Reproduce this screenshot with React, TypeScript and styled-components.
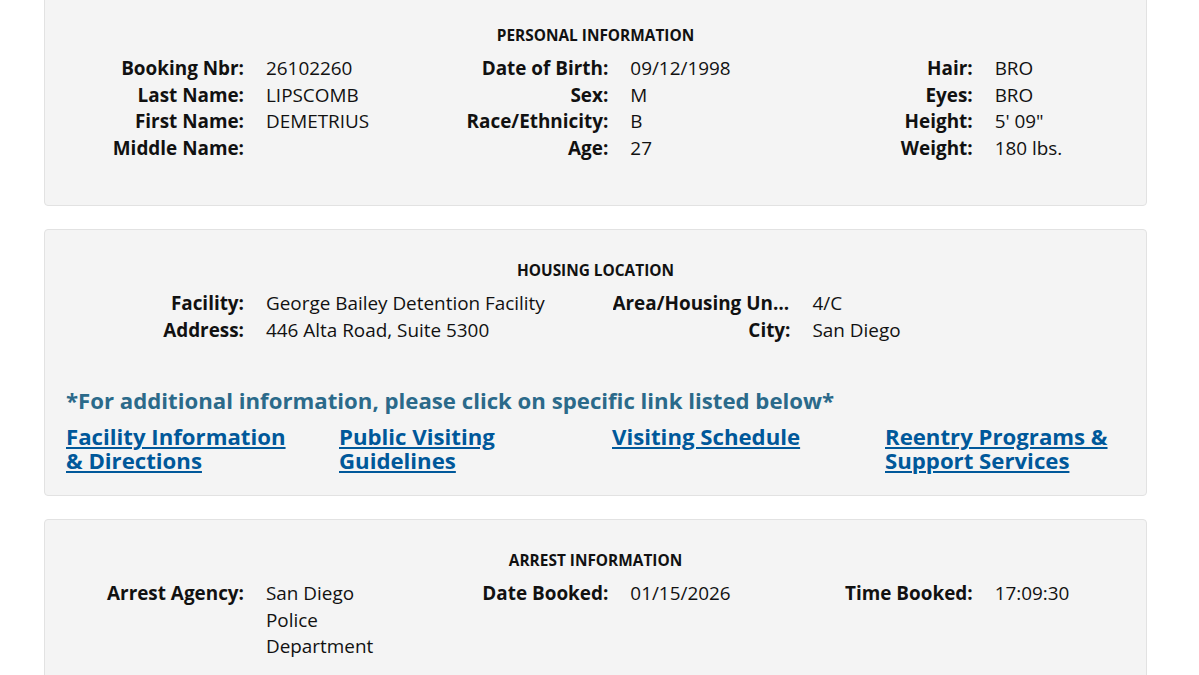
import React from "react";
import styled, { createGlobalStyle } from "styled-components";

const Global = createGlobalStyle`
  html, body { margin: 0; padding: 0; background: #ffffff; }
  body { font-family: "Open Sans", "Noto Sans", sans-serif; color: #111; }
`;

const Page = styled.div`
  display: flex;
  flex-direction: column;
  gap: 23px;
  padding: 0 52px 0 44px;
  margin-top: -6px;
`;

const Panel = styled.section`
  background: #f4f4f4;
  border: 1px solid #e2e2e2;
  border-radius: 4px;
  padding: 30px 4px 0 4px;
`;

const Title = styled.h2`
  margin: 0 0 8px 0;
  text-align: center;
  font-size: 15.4px;
  line-height: 22px;
  font-weight: 700;
  color: #111;
`;

const Grid = styled.div<{ $cols: number; $bottom: number }>`
  display: grid;
  grid-template-columns: repeat(${(p) => p.$cols}, 1fr);
  padding-bottom: ${(p) => p.$bottom}px;
`;

const Column = styled.div`
  display: flex;
  flex-direction: column;
  padding-left: 17px;
`;

const Row = styled.div`
  display: flex;
  align-items: flex-start;
  gap: 22px;
  font-size: 18.9px;
  line-height: 26.5px;
`;

const Label = styled.div`
  width: 178px;
  flex: none;
  text-align: right;
  font-weight: 700;
  white-space: nowrap;
  overflow: hidden;
  text-overflow: ellipsis;
`;

const Value = styled.div<{ $wide?: boolean }>`
  font-weight: 400;
  min-width: 0;
  max-width: ${(p) => (p.$wide ? "none" : "120px")};
  white-space: ${(p) => (p.$wide ? "nowrap" : "normal")};
`;

const LinksBlock = styled.div`
  padding: 0 0 22px 17px;
  margin-top: 44px;
`;

const Notice = styled.p`
  margin: 0 0 10px 0;
  font-size: 22.2px;
  line-height: 28px;
  font-weight: 700;
  color: #2b6a8a;
`;

const LinkGrid = styled.div`
  display: grid;
  grid-template-columns: repeat(4, 273px);
`;

const LinkItem = styled.a`
  font-size: 22.2px;
  line-height: 24px;
  font-weight: 700;
  color: #00589a;
  text-decoration: underline;
  text-decoration-thickness: 2px;
  text-underline-offset: 2px;
  cursor: pointer;
`;

type Pair = [string, string];

const Col = ({ rows, wide }: { rows: Pair[]; wide?: boolean }) => (
  <Column>
    {rows.map(([l, v]) => (
      <Row key={l}>
        <Label>{l}</Label>
        <Value $wide={wide}>{v}</Value>
      </Row>
    ))}
  </Column>
);

export default function App() {
  return (
    <>
      <Global />
      <Page>
        <Panel>
          <Title>PERSONAL INFORMATION</Title>
          <Grid $cols={3} $bottom={44}>
            <Col
              wide
              rows={[
                ["Booking Nbr:", "26102260"],
                ["Last Name:", "LIPSCOMB"],
                ["First Name:", "DEMETRIUS"],
                ["Middle Name:", ""],
              ]}
            />
            <Col
              wide
              rows={[
                ["Date of Birth:", "09/12/1998"],
                ["Sex:", "M"],
                ["Race/Ethnicity:", "B"],
                ["Age:", "27"],
              ]}
            />
            <Col
              wide
              rows={[
                ["Hair:", "BRO"],
                ["Eyes:", "BRO"],
                ["Height:", "5' 09\""],
                ["Weight:", "180 lbs."],
              ]}
            />
          </Grid>
        </Panel>

        <Panel>
          <Title>HOUSING LOCATION</Title>
          <Grid $cols={2} $bottom={0}>
            <Col
              wide
              rows={[
                ["Facility:", "George Bailey Detention Facility"],
                ["Address:", "446 Alta Road, Suite 5300"],
              ]}
            />
            <Col
              wide
              rows={[
                ["Area/Housing Unit:", "4/C"],
                ["City:", "San Diego"],
              ]}
            />
          </Grid>
          <LinksBlock>
            <Notice>*For additional information, please click on specific link listed below*</Notice>
            <LinkGrid>
              <LinkItem>Facility Information<br />&amp; Directions</LinkItem>
              <LinkItem>Public Visiting<br />Guidelines</LinkItem>
              <LinkItem>Visiting Schedule</LinkItem>
              <LinkItem>Reentry Programs &amp;<br />Support Services</LinkItem>
            </LinkGrid>
          </LinksBlock>
        </Panel>

        <Panel>
          <Title>ARREST INFORMATION</Title>
          <Grid $cols={3} $bottom={44}>
            <Col rows={[["Arrest Agency:", "San Diego Police Department"]]} />
            <Col rows={[["Date Booked:", "01/15/2026"]]} />
            <Col rows={[["Time Booked:", "17:09:30"]]} />
          </Grid>
        </Panel>
      </Page>
    </>
  );
}
